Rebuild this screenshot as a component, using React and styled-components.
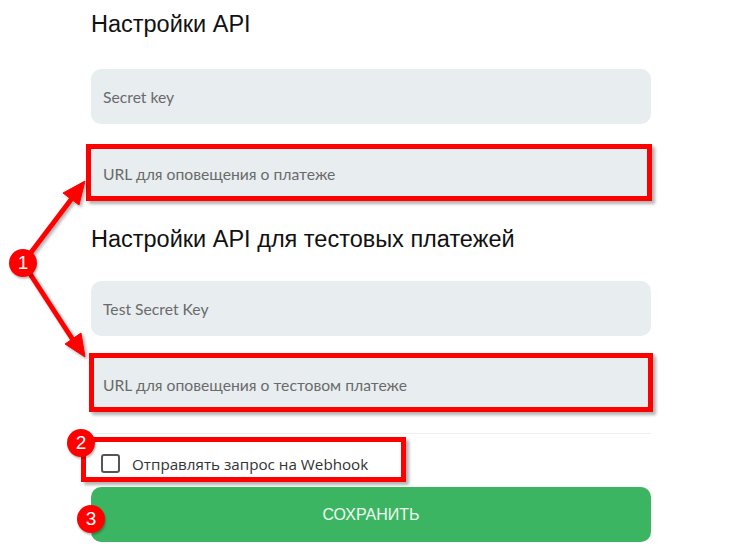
import React from 'react'
import styled, { createGlobalStyle } from 'styled-components'

const GlobalStyle = createGlobalStyle`
  body {
    margin: 0;
    background: #fff;
    font-family: Lato, 'Liberation Sans', sans-serif;
  }
`

const Page = styled.div`
  position: relative;
  width: 740px;
  height: 555px;
  overflow: hidden;
`

const Form = styled.div`
  display: flex;
  flex-direction: column;
  width: 560px;
  padding-left: 91px;
`

const Heading = styled.h2`
  margin: ${props => props.top}px 0 0;
  font-family: 'Liberation Sans', Arial, sans-serif;
  font-weight: 400;
  font-size: 23.5px;
  line-height: 28px;
  color: #111;
`

const Input = styled.input`
  box-sizing: border-box;
  width: 100%;
  height: ${props => props.h || 55}px;
  margin-top: ${props => props.top || 0}px;
  border: none;
  border-radius: ${props => (props.flat ? 0 : 10)}px;
  background: #e8eef0;
  padding: ${props => props.pt || 0}px 12px 0 ${props => props.pl || 12}px;
  font-family: Lato, sans-serif;
  font-size: 15.7px;
  color: #333;
  outline: none;
  &::placeholder {
    color: #6a6a6a;
  }
`

const Highlight = styled.div`
  box-sizing: border-box;
  display: flex;
  align-items: stretch;
  margin: ${props => props.top}px 0 0 ${props => props.left}px;
  width: ${props => props.w}px;
  height: ${props => props.h}px;
  border: 5px solid #ff0000;
  box-shadow: 3px 3px 3px rgba(0, 0, 0, 0.3);
`

const Divider = styled.hr`
  margin: 21px 0 0;
  border: none;
  border-top: 1px solid #eeeeee;
`

const CheckRow = styled.label`
  display: flex;
  align-items: center;
  gap: 12px;
  padding: 8px 0 0 15px;
  font-family: 'Open Sans', sans-serif;
  font-size: 15.2px;
  color: #333;
`

const Box = styled.span`
  box-sizing: border-box;
  width: 19px;
  height: 19px;
  border: 2px solid #555;
  border-radius: 3px;
`

const Button = styled.button`
  margin-top: 5px;
  height: 55px;
  border: none;
  border-radius: 10px;
  background: #3cb563;
  color: #effbf0;
  font-family: 'Liberation Sans', Arial, sans-serif;
  font-size: 16px;
  text-transform: uppercase;
`

const Badge = styled.div`
  position: absolute;
  left: ${props => props.x - 14}px;
  top: ${props => props.y - 14}px;
  width: 28px;
  height: 28px;
  border-radius: 50%;
  background: #ff0000;
  color: #fff;
  display: flex;
  align-items: center;
  justify-content: center;
  font-family: 'Liberation Sans', Arial, sans-serif;
  font-size: 19px;
  box-shadow: 1px 2px 2px rgba(0, 0, 0, 0.25);
`

const Arrows = styled.svg`
  position: absolute;
  left: 0;
  top: 0;
  pointer-events: none;
`

export default function App() {
  return (
    <Page>
      <GlobalStyle />
      <Form>
        <Heading top={10}>Настройки API</Heading>
        <Input top={31} placeholder="Secret key" />
        <Highlight top={20} left={-5} w={566} h={57}>
          <Input flat h={47} pt={2} placeholder="URL для оповещения о платеже" />
        </Highlight>
        <Heading top={24}>Настройки API для тестовых платежей</Heading>
        <Input top={28} placeholder="Test Secret Key" />
        <Highlight top={17} left={-2} w={564} h={59}>
          <Input flat h={49} pt={4} pl={9} placeholder="URL для оповещения о тестовом платеже" />
        </Highlight>
        <Divider />
        <Highlight top={3} left={-10} w={325} h={45}>
          <CheckRow>
            <Box />
            Отправлять запрос на Webhook
          </CheckRow>
        </Highlight>
        <Button>Сохранить</Button>
      </Form>

      <Arrows width="740" height="555" viewBox="0 0 740 555">
        <defs>
          <filter id="sh" x="-20%" y="-20%" width="140%" height="140%">
            <feDropShadow dx="2" dy="2" stdDeviation="1.5" floodColor="#000" floodOpacity="0.3" />
          </filter>
        </defs>
        <g filter="url(#sh)" fill="#ff0000" stroke="#ff0000">
          <line x1="23" y1="263" x2="73" y2="197" strokeWidth="5" />
          <polygon points="85,181 79,205 63,193" strokeWidth="1" />
          <line x1="23" y1="263" x2="73" y2="340" strokeWidth="5" />
          <polygon points="85,357 81,333 65,344" strokeWidth="1" />
        </g>
      </Arrows>
      <Badge x={23} y={263}>1</Badge>
      <Badge x={81} y={443}>2</Badge>
      <Badge x={91} y={519}>3</Badge>
    </Page>
  )
}
